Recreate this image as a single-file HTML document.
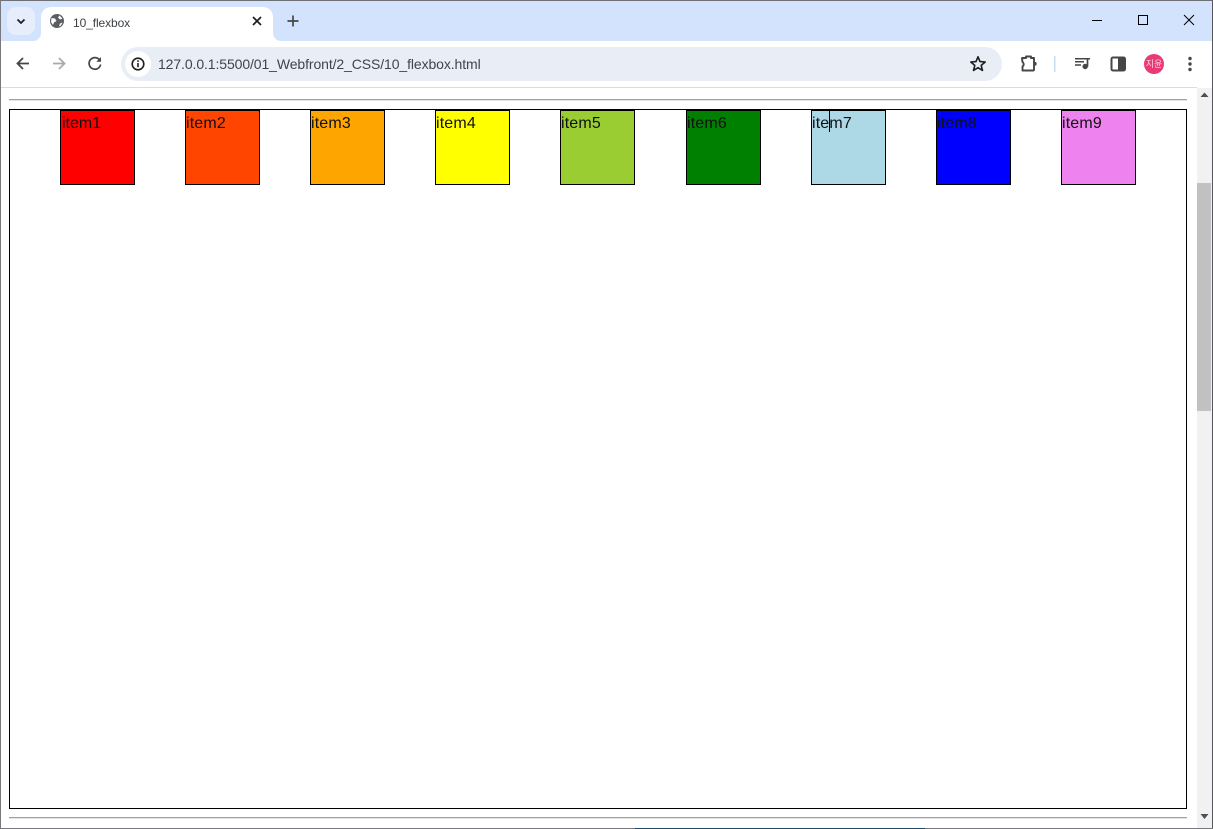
<!DOCTYPE html>
<html lang="ko">
<head>
<meta charset="utf-8">
<title>10_flexbox</title>
<style>
html,body{margin:0;padding:0;background:#fff;}
body{width:1213px;height:829px;position:relative;overflow:hidden;font-family:"Liberation Sans","Noto Sans CJK KR",sans-serif;color:#000;}
.a{position:absolute;}
.item{position:absolute;top:110px;width:73px;height:73px;border:1px solid #000;font-size:16px;line-height:24px;white-space:nowrap;}
.item span{position:absolute;left:0;top:1px;letter-spacing:.15px;color:#111;}
svg{position:absolute;overflow:visible;}
</style>
</head>
<body>
<!-- tab strip -->
<div class="a" style="left:0;top:0;width:1213px;height:41px;background:#d3e3fd;"></div>
<div class="a" style="left:0;top:0;width:1213px;height:1px;background:#6f7073;"></div>
<!-- tab search button -->
<div class="a" style="left:7px;top:7px;width:28px;height:28px;border-radius:9px;background:#e6eefc;"></div>
<svg style="left:0;top:0" width="60" height="41"><path d="M17.5 19.5 L21 23 L24.5 19.5" fill="none" stroke="#1f1f1f" stroke-width="1.8"/></svg>
<!-- active tab -->
<div class="a" style="left:41px;top:7px;width:232px;height:34px;background:#fff;border-radius:10px 10px 0 0;"></div>
<svg style="left:0;top:0" width="300" height="48">
  <path d="M41 33 V41 H33 A8 8 0 0 0 41 33Z" fill="#fff"/>
  <path d="M273 33 V41 H281 A8 8 0 0 1 273 33Z" fill="#fff"/>
  <circle cx="57" cy="21" r="7" fill="#5b5e63"/>
  <path d="M51.5 18 L55 18.5 L56.5 21 L54 22.5 L53 25 L51 22Z M59.5 15.5 L62.5 18.5 L60 19.5 L58 17.5Z M60 23.5 L62.5 22.5 L61 25.5 L59 26.5Z" fill="#fff"/>
  <path d="M253 17 L261 25 M261 17 L253 25" stroke="#1f1f1f" stroke-width="1.7"/>
  <path d="M293 15.5 V26.5 M287.5 21 H298.5" stroke="#444746" stroke-width="1.7"/>
</svg>
<div class="a" style="left:73px;top:15px;font-size:12px;line-height:16px;color:#3c4043;letter-spacing:-0.1px;">10_flexbox</div>
<!-- window controls -->
<svg style="left:0;top:0" width="1213" height="41">
  <path d="M1092 20.5 H1102" stroke="#000" stroke-width="1"/>
  <rect x="1138.5" y="15.5" width="9" height="9" fill="none" stroke="#000" stroke-width="1"/>
  <path d="M1184 15 L1194 25 M1194 15 L1184 25" stroke="#000" stroke-width="1"/>
</svg>
<!-- toolbar -->
<div class="a" style="left:0;top:41px;width:1213px;height:46px;background:#fff;border-radius:8px 8px 0 0;"></div>
<div class="a" style="left:0;top:87px;width:1197px;height:1px;background:#dcdcdc;"></div>
<svg style="left:0;top:41px" width="120" height="46">
  <path d="M29 23 H18 M23 17.5 L17.5 23 L23 28.5" transform="translate(0,-0.5)" fill="none" stroke="#444746" stroke-width="1.8"/>
  <path d="M53 22.5 H64 M59 17 L64.5 22.5 L59 28" fill="none" stroke="#a8abae" stroke-width="1.8"/>
  <path d="M99.6 19 A5.8 5.8 0 1 0 100.6 23.5" fill="none" stroke="#444746" stroke-width="1.7"/>
  <path d="M101 16 V20.7 H96.3Z" fill="#444746"/>
</svg>
<!-- omnibox -->
<div class="a" style="left:121px;top:47px;width:881px;height:34px;border-radius:17px;background:#e9edf6;"></div>
<div class="a" style="left:125px;top:51px;width:26px;height:26px;border-radius:13px;background:#fff;"></div>
<svg style="left:130px;top:55px" width="16" height="18">
  <circle cx="8" cy="9" r="5.8" fill="none" stroke="#1f1f1f" stroke-width="1.6"/>
  <path d="M8 8 V12.2" stroke="#1f1f1f" stroke-width="1.6"/>
  <rect x="7.2" y="5.3" width="1.6" height="1.6" fill="#1f1f1f"/>
</svg>
<div class="a" style="left:158px;top:55px;font-size:14px;line-height:18px;color:#3c4550;white-space:nowrap;letter-spacing:-0.1px;">127.0.0.1:5500/01_Webfront/2_CSS/10_flexbox.html</div>
<!-- toolbar right icons -->
<svg style="left:0;top:0" width="1213" height="87">
  <path d="M978 56.8 L980 61.6 L985.2 62 L981.2 65.4 L982.5 70.4 L978 67.7 L973.5 70.4 L974.8 65.4 L970.8 62 L976 61.6Z" fill="none" stroke="#1f1f1f" stroke-width="1.6" stroke-linejoin="round"/>
  <path d="M1022 58 H1026 V56.5 H1031 V58 H1034 V69.5 Q1034 70.5 1033 70.5 H1022.5 V66.5 Q1025 64.2 1022.5 62Z" fill="none" stroke="#444746" stroke-width="1.9" stroke-linejoin="round"/>
  <rect x="1034" y="62" width="2.6" height="3.6" rx="1.2" fill="#444746"/>
  <rect x="1054" y="56" width="1.5" height="16" fill="#c7dcf7"/>
  <path d="M1075 58.7 H1090 M1075 61.8 H1084 M1075 65 H1081" stroke="#444746" stroke-width="1.5"/>
  <path d="M1087.5 58.5 V66.5" stroke="#444746" stroke-width="1.7" fill="none"/>
  <circle cx="1085.2" cy="66.5" r="2.7" fill="#444746"/>
  <rect x="1111.5" y="57.5" width="13.5" height="13" rx="1.5" fill="none" stroke="#444746" stroke-width="2"/>
  <rect x="1118" y="57.5" width="7" height="13" fill="#444746"/>
  <circle cx="1154" cy="64" r="10" fill="#ea3a75"/>
  <circle cx="1190" cy="58.5" r="1.7" fill="#444746"/>
  <circle cx="1190" cy="64" r="1.7" fill="#444746"/>
  <circle cx="1190" cy="69.5" r="1.7" fill="#444746"/>
</svg>
<div class="a" style="left:1144px;top:58px;width:20px;text-align:center;font-size:9px;line-height:12px;color:#fcd3e1;font-family:'Liberation Sans','Noto Sans CJK KR',sans-serif;">지윤</div>
<!-- page content -->
<div class="a" style="left:9px;top:99px;width:1178px;height:1px;background:#a0a0a0;"></div>
<div class="a" style="left:9px;top:100px;width:1178px;height:1px;background:#e4e4e4;"></div>
<div class="a" style="left:9px;top:109px;width:1176px;height:698px;border:1px solid #000;"></div>
<div class="item" style="left:60px;background:red;"><span style="left:1px;letter-spacing:0">item1</span></div>
<div class="item" style="left:185px;background:orangered;"><span>item2</span></div>
<div class="item" style="left:310px;background:orange;"><span>item3</span></div>
<div class="item" style="left:435px;background:yellow;"><span>item4</span></div>
<div class="item" style="left:560px;background:yellowgreen;"><span>item5</span></div>
<div class="item" style="left:686px;background:green;"><span>item6</span></div>
<div class="item" style="left:811px;background:lightblue;"><span>item7</span></div>
<div class="item" style="left:936px;background:blue;"><span>item8</span></div>
<div class="item" style="left:1061px;background:violet;"><span>item9</span></div>
<!-- text cursor -->
<div class="a" style="left:829px;top:110px;width:1px;height:22px;background:#000;"></div>
<div class="a" style="left:9px;top:817px;width:1178px;height:1px;background:#a0a0a0;"></div>
<div class="a" style="left:9px;top:818px;width:1178px;height:1px;background:#e4e4e4;"></div>
<!-- scrollbar -->
<div class="a" style="left:1197px;top:88px;width:15px;height:740px;background:#f1f1f1;"></div>
<div class="a" style="left:1197px;top:183px;width:14px;height:228px;background:#c1c1c1;"></div>
<svg style="left:1197px;top:88px" width="15" height="740">
  <path d="M7.5 4.5 L11.5 9 H3.5Z" fill="#505050"/>
  <path d="M3.5 726 H11.5 L7.5 731Z" fill="#505050"/>
</svg>
<!-- window edges -->
<div class="a" style="left:0;top:0;width:1px;height:829px;background:#77797c;"></div>
<div class="a" style="left:1212px;top:0;width:1px;height:829px;background:#55575a;"></div>
<div class="a" style="left:0;top:828px;width:1213px;height:1px;background:#77797c;"></div>
<div class="a" style="left:635px;top:828px;width:290px;height:1px;background:#1a4a6e;"></div>
</body>
</html>
